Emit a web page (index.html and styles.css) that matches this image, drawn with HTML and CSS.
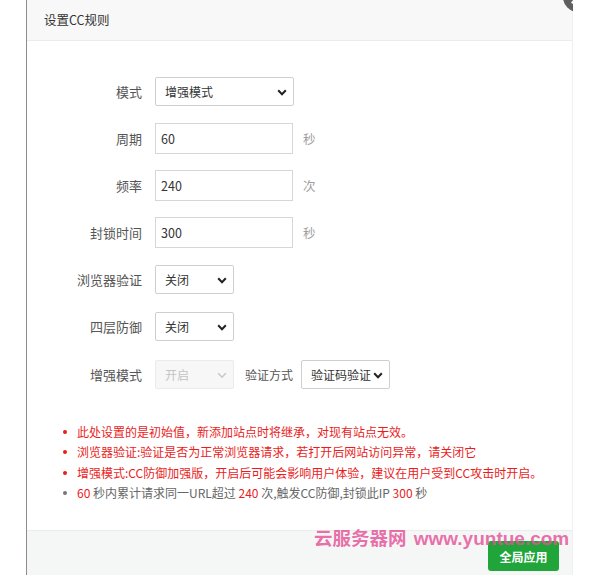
FILE: index.html
```html
<!DOCTYPE html>
<html lang="zh-CN">
<head>
<meta charset="utf-8">
<title>设置CC规则</title>
<link rel="stylesheet" href="styles.css">
</head>
<body>
<div class="stage">
  <div class="dialog">
    <div class="title">设置CC规则</div>
    <svg class="close" width="30" height="30" viewBox="0 0 30 30"><circle cx="15" cy="15" r="15" fill="#5f5f5f"/><path d="M9.5 9.5 L20.5 20.5 M20.5 9.5 L9.5 20.5" stroke="#fff" stroke-width="2.4" stroke-linecap="round"/></svg>
    <div class="body">
      <div class="row">
        <label class="lbl">模式</label>
        <span class="sel w139"><span class="sel-text">增强模式</span><svg class="chev" width="10" height="7" viewBox="0 0 10 7"><path d="M1.2 1.3 L5 5.2 L8.8 1.3" fill="none" stroke="#222" stroke-width="2"/></svg></span>
      </div>
      <div class="row">
        <label class="lbl">周期</label>
        <span class="inp">60</span><span class="unit">秒</span>
      </div>
      <div class="row">
        <label class="lbl">频率</label>
        <span class="inp">240</span><span class="unit">次</span>
      </div>
      <div class="row">
        <label class="lbl">封锁时间</label>
        <span class="inp">300</span><span class="unit">秒</span>
      </div>
      <div class="row">
        <label class="lbl">浏览器验证</label>
        <span class="sel w79"><span class="sel-text">关闭</span><svg class="chev" width="10" height="7" viewBox="0 0 10 7"><path d="M1.2 1.3 L5 5.2 L8.8 1.3" fill="none" stroke="#222" stroke-width="2"/></svg></span>
      </div>
      <div class="row">
        <label class="lbl">四层防御</label>
        <span class="sel w79"><span class="sel-text">关闭</span><svg class="chev" width="10" height="7" viewBox="0 0 10 7"><path d="M1.2 1.3 L5 5.2 L8.8 1.3" fill="none" stroke="#222" stroke-width="2"/></svg></span>
      </div>
      <div class="row row-last">
        <label class="lbl">增强模式</label>
        <span class="sel w79 disabled"><span class="sel-text">开启</span><svg class="chev" width="10" height="7" viewBox="0 0 10 7"><path d="M1.2 1.3 L5 5.2 L8.8 1.3" fill="none" stroke="#c8c8c8" stroke-width="1.6"/></svg></span>
        <span class="lbl2">验证方式</span>
        <span class="sel w89"><span class="sel-text">验证码验证</span><svg class="chev" width="10" height="7" viewBox="0 0 10 7"><path d="M1.2 1.3 L5 5.2 L8.8 1.3" fill="none" stroke="#222" stroke-width="2"/></svg></span>
      </div>
      <ul class="notes">
        <li class="red">此处设置的是初始值，新添加站点时将继承，对现有站点无效。</li>
        <li class="red">浏览器验证:验证是否为正常浏览器请求，若打开后网站访问异常，请关闭它</li>
        <li class="red">增强模式:CC防御加强版，开启后可能会影响用户体验，建议在用户受到CC攻击时开启。</li>
        <li class="gray"><span class="num">60</span>&nbsp;秒内累计请求同一URL超过&nbsp;<span class="num">240</span>&nbsp;次,触发CC防御,封锁此IP&nbsp;<span class="num">300</span>&nbsp;秒</li>
      </ul>
    </div>
    <div class="footer">
      <span class="btn">全局应用</span>
    </div>
  </div>
  <div class="watermark">云服务器网 <span class="wm-url">www.yuntue.com</span></div>
</div>
</body>
</html>
```

FILE: styles.css
```css
* { box-sizing: border-box; }
html, body { margin: 0; padding: 0; background: #fff; }
body {
  font-family: "Noto Sans CJK SC", "Noto Sans", sans-serif;
  color: #333;
}
.stage {
  position: relative;
  width: 573px;
  height: 575px;
  overflow: hidden;
}
.dialog {
  position: relative;
  margin-left: 26px;
  width: 547px;
  height: 575px;
  border-left: 1px solid #8c8c8c;
  border-right: 1px solid #f0f0f0;
  background: #fff;
}
.title {
  height: 41px;
  line-height: 40px;
  padding-left: 17px;
  background: #f8f8f8;
  border-bottom: 1px solid #ececec;
  font-size: 12.5px;
  color: #333;
}
.close {
  position: absolute;
  left: 536px;
  top: -18px;
}
.body {
  padding-top: 27px;
}
.row {
  display: flex;
  align-items: center;
  height: 47px;
}
.row-last { height: 48px; }
.lbl {
  width: 115px;
  text-align: right;
  margin-right: 13px;
  font-size: 13px;
  color: #555;
}
.lbl2 {
  margin-left: 11px;
  margin-right: 8px;
  font-size: 12px;
  color: #555;
}
.inp {
  display: flex;
  align-items: center;
  width: 138px;
  height: 31px;
  padding-left: 5px;
  border: 1px solid #d6d6d6;
  font-size: 12.5px;
  color: #333;
  background: #fff;
}
.unit {
  margin-left: 10px;
  font-size: 12.5px;
  color: #a0a0a0;
}
.sel {
  position: relative;
  display: flex;
  align-items: center;
  height: 29px;
  padding-left: 9px;
  border: 1px solid #cfcfcf;
  border-radius: 2px;
  font-size: 12px;
  color: #333;
  background: #fff;
}
.w139 { width: 139px; }
.w79 { width: 79px; }
.w89 { width: 89px; }
.sel .chev {
  position: absolute;
  right: 6px;
  top: 11px;
}
.sel.disabled {
  background: #f7f7f7;
  border-color: #ebebeb;
  color: #c4c4c4;
}
.notes {
  list-style: none;
  margin: 24px 0 0 0;
  padding: 0 0 0 36px;
  font-size: 12px;
  line-height: 20.3px;
}
.notes li {
  position: relative;
  padding-left: 14px;
  white-space: nowrap;
}
.notes li::before {
  content: "";
  position: absolute;
  left: 0;
  top: 8px;
  width: 4px;
  height: 4px;
  border-radius: 50%;
}
.notes .red { color: #ea1c1c; }
.notes .red::before { background: #ea1c1c; }
.notes .gray { color: #666; }
.notes .gray::before { background: #777; }
.notes .num { color: #ea1c1c; }
.footer {
  margin-top: 27px;
  height: 60px;
  border-top: 1px solid #ececec;
  background: #f5f6f6;
  display: flex;
  justify-content: flex-end;
  padding: 10px 13px 0 0;
}
.btn {
  display: flex;
  align-items: center;
  justify-content: center;
  width: 71px;
  height: 30px;
  background: #20a53a;
  border-radius: 3px;
  color: #fff;
  font-size: 12px;
  font-weight: bold;
}
.watermark {
  position: absolute;
  left: 314px;
  top: 524px;
  font-size: 18.5px;
  font-weight: bold;
  color: rgba(230, 80, 150, 0.82);
  white-space: nowrap;
}
.wm-url {
  font-family: "Liberation Sans", sans-serif;
  font-size: 19px;
  margin-left: 3px;
}
```
